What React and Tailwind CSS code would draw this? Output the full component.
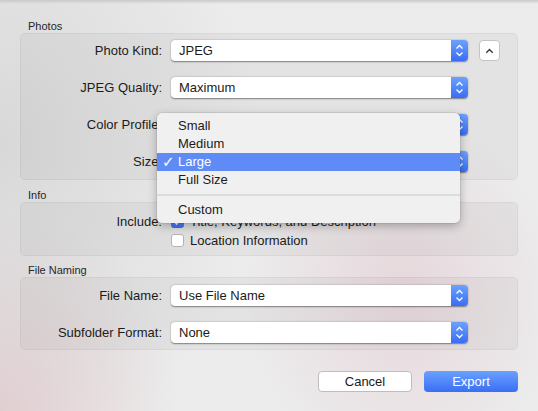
import React from 'react';

const Stepper = () => (
  <div className="flex w-[17px] items-center justify-center rounded-r-[4px] bg-gradient-to-b from-[#6da1fd] to-[#3a6cf5]">
    <svg width="17" height="21" viewBox="0 0 17 21">
      <path d="M5.5 8.5 L8.5 5.5 L11.5 8.5" fill="none" stroke="#fff" strokeWidth="1.3" />
      <path d="M5.5 12.5 L8.5 15.5 L11.5 12.5" fill="none" stroke="#fff" strokeWidth="1.3" />
    </svg>
  </div>
);

const Select = ({ value }) => (
  <div className="flex h-[21px] w-[297px] rounded-[4px] bg-white shadow-[0_0.5px_1.5px_rgba(0,0,0,0.45)]">
    <div className="flex-1 pl-2 text-[13px] leading-[21px] text-[#1b1b1b]">{value}</div>
    <Stepper />
  </div>
);

const Row = ({ label, value, children }) => (
  <div className="flex h-[21px] items-center">
    <div className="w-[141px] text-right text-[13px] text-[#1b1b1b]">{label}</div>
    <div className="ml-[9px]">
      <Select value={value} />
    </div>
    {children}
  </div>
);

const Checkbox = ({ checked }) =>
  checked ? (
    <div className="flex h-[13px] w-[13px] items-center justify-center rounded-[3px] bg-gradient-to-b from-[#6da1fd] to-[#3a6cf5]">
      <svg width="9" height="9" viewBox="0 0 9 9">
        <path d="M1.5 4.8 L3.6 7 L7.6 1.8" fill="none" stroke="#fff" strokeWidth="1.5" />
      </svg>
    </div>
  ) : (
    <div className="h-[13px] w-[13px] rounded-[3px] border border-[#b4b4b4] bg-white" />
  );

const SectionLabel = ({ children, className = '' }) => (
  <div className={`pl-2 text-[11px] leading-[13px] text-[#262626] ${className}`}>{children}</div>
);

const Box = ({ children, className = '' }) => (
  <div className={`rounded-[5px] border border-[rgba(0,0,0,0.045)] bg-[rgba(0,0,0,0.035)] ${className}`}>{children}</div>
);

const sizes = ['Small', 'Medium', 'Large', 'Full Size'];

export default function App() {
  return (
    <div className="relative h-[411px] w-[538px] overflow-hidden bg-[#ececec] font-['Liberation_Sans',Arial,sans-serif]">
      {/* backdrop tint */}
      <div className="absolute inset-0 bg-[radial-gradient(ellipse_260px_330px_at_0%_35%,rgba(200,200,200,0.55),transparent),radial-gradient(ellipse_180px_200px_at_0%_100%,rgba(226,200,204,0.8),transparent),radial-gradient(ellipse_160px_180px_at_75%_72%,rgba(228,206,212,0.7),transparent)]" />
      <div className="absolute inset-x-0 top-0 h-[4px] bg-gradient-to-b from-[#c9c9c9] to-transparent" />

      <div className="relative flex flex-col px-5 pt-[20px]">
        <SectionLabel>Photos</SectionLabel>
        <Box className="flex flex-col gap-[16px] pb-[7px] pt-[6px]">
          <Row label="Photo Kind:" value="JPEG">
            <div className="ml-[11px] flex h-[21px] w-[21px] items-center justify-center rounded-[4px] border border-[#c4c4c4] bg-white">
              <svg width="9" height="6" viewBox="0 0 9 6">
                <path d="M1.3 4.8 L4.5 1.6 L7.7 4.8" fill="none" stroke="#3a3a3a" strokeWidth="1.4" />
              </svg>
            </div>
          </Row>
          <Row label="JPEG Quality:" value="Maximum" />
          <Row label="Color Profile:" value="sRGB IEC61966-2.1" />
          <Row label="Size:" value="Large" />
        </Box>

        <SectionLabel className="mt-[9px]">Info</SectionLabel>
        <Box className="flex pb-[7px] pt-[11px]">
          <div className="w-[141px] text-right text-[13px] leading-[15px] text-[#1b1b1b]">Include:</div>
          <div className="ml-[9px] flex flex-col gap-[4px]">
            <div className="flex h-[15px] items-center gap-[6px] text-[13px] text-[#1b1b1b]">
              <Checkbox checked />
              Title, Keywords, and Description
            </div>
            <div className="flex h-[15px] items-center gap-[6px] text-[13px] text-[#1b1b1b]">
              <Checkbox />
              Location Information
            </div>
          </div>
        </Box>

        <SectionLabel className="mt-[8px]">File Naming</SectionLabel>
        <Box className="flex flex-col gap-[16px] pb-[6px] pt-[7px]">
          <Row label="File Name:" value="Use File Name" />
          <Row label="Subfolder Format:" value="None" />
        </Box>

        <div className="mt-[21px] flex justify-end gap-[12px]">
          <button className="h-[21px] w-[94px] rounded-[4px] border border-[#bdbdbd] bg-white text-[13px] text-[#1b1b1b]">
            Cancel
          </button>
          <button className="h-[21px] w-[94px] rounded-[4px] bg-gradient-to-b from-[#6aa0fd] to-[#3b6ef5] text-[13px] text-white">
            Export
          </button>
        </div>
      </div>

      {/* open Size popup menu */}
      <div className="absolute left-[157px] top-[113px] w-[303px] rounded-[5px] bg-[#f0f0f0] py-[4px] shadow-[0_3px_10px_rgba(0,0,0,0.28),0_0_0_0.5px_rgba(0,0,0,0.12)]">
        {sizes.map((s) => (
          <div
            key={s}
            className={`flex h-[18px] items-center text-[13px] ${s === 'Large' ? 'bg-[#5f8bf6] text-white' : 'text-[#1b1b1b]'}`}
          >
            <span className="w-[21px] pl-[5px] font-['DejaVu_Sans',sans-serif] text-[15px] font-bold leading-[18px]">{s === 'Large' ? '✓' : ''}</span>
            {s}
          </div>
        ))}
        <div className="my-[5px] h-[2px] bg-[#dcdcdc]" />
        <div className="flex h-[18px] items-center pl-[21px] text-[13px] text-[#1b1b1b]">Custom</div>
      </div>
    </div>
  );
}
